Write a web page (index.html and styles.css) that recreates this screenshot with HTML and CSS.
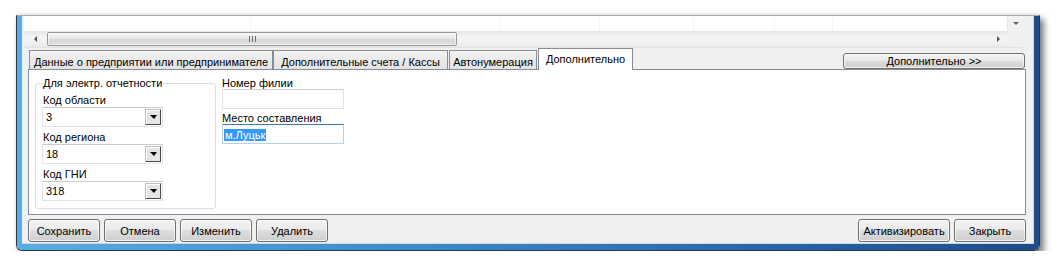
FILE: index.html
```html
<!DOCTYPE html>
<html>
    <head lang="ru">
        <meta charset="UTF-8">
        <title>Дополнительно</title>
        <link rel="stylesheet" href="styles.css">
    </head>
    <body>
        <div class="window">
            <div class="frame">
                <div class="content">
                    <div class="grid">
                        <div class="rows">
                            <div class="cells">
                                <span class="cell c1"></span>
                                <span class="cell c2"></span>
                                <span class="cell c3"></span>
                                <span class="cell c4"></span>
                                <span class="cell c5"></span>
                                <span class="cell c6"></span>
                            </div>
                            <div class="vscroll"><span class="tri-down"></span></div>
                        </div>
                        <div class="hscroll">
                            <span class="sb-left"><span class="tri-left"></span></span>
                            <div class="track">
                                <div class="thumb"><span class="grip"></span></div>
                            </div>
                            <span class="sb-right"><span class="tri-right"></span></span>
                            <span class="corner"></span>
                        </div>
                    </div>
                    <div class="tabs">
                        <div class="tab t1">Данные о предприятии или предпринимателе</div>
                        <div class="tab t2">Дополнительные счета / Кассы</div>
                        <div class="tab t3">Автонумерация</div>
                        <div class="tab on">Дополнительно</div>
                        <button class="btn more">Дополнительно &gt;&gt;</button>
                    </div>
                    <div class="panel">
                        <fieldset class="group">
                            <legend>Для электр. отчетности</legend>
                            <label>Код области</label>
                            <div class="combo"><span class="val">3</span><span class="drop"><span class="tri-down dark"></span></span></div>
                            <label>Код региона</label>
                            <div class="combo"><span class="val">18</span><span class="drop"><span class="tri-down dark"></span></span></div>
                            <label>Код ГНИ</label>
                            <div class="combo"><span class="val">318</span><span class="drop"><span class="tri-down dark"></span></span></div>
                        </fieldset>
                        <div class="side">
                            <label>Номер филии</label>
                            <div class="edit"></div>
                            <label>Место составления</label>
                            <div class="edit focus"><span class="sel">м.Луцьк</span></div>
                        </div>
                    </div>
                    <div class="actions">
                        <button class="btn">Сохранить</button>
                        <button class="btn">Отмена</button>
                        <button class="btn">Изменить</button>
                        <button class="btn">Удалить</button>
                        <button class="btn wide">Активизировать</button>
                        <button class="btn">Закрыть</button>
                    </div>
                </div>
            </div>
        </div>
    </body>
</html>
```
FILE: styles.css
```css
*{
    box-sizing:border-box;
}
body{
    margin:0;
    background:#fff;
    font-family:"Liberation Sans", Arial, sans-serif;
    font-size:11px;
    color:#000;
}
.window{
    width:1024px;
    height:236px;
    margin:15px 0 0 16px;
    border:1px solid #24364b;
    border-top-color:#a9aeb4;
    border-radius:0 0 6px 6px;
    box-shadow:4px 4px 6px rgba(0,0,0,.5), 0 -1px 3px rgba(0,0,0,.1);
    display:flex;
}
.frame{
    flex:1;
    display:flex;
    padding:0 5px 6px;
    border-radius:0 0 5px 5px;
    background:linear-gradient(to right,#58ade1,#3e8ecf 35%,#2a69ad 70%,#1c4b88);
}
.content{
    flex:1;
    display:flex;
    flex-direction:column;
    background:#f0f0f0;
    border:1px solid #cdd8e3;
    border-top:0;
    border-left-color:#eaf3fa;
}

/* grid + scrollbars */
.grid{
    margin-left:1px;
    width:999px;
    border-bottom:1px solid #e2e2e2;
}
.rows{
    display:flex;
    height:15px;
}
.cells{
    flex:1;
    display:flex;
    background:#fff;
}
.cell{
    border-right:1px solid #f7f7f7;
}
.c1{width:227px;}
.c2{width:249px;}
.c3{width:100px;}
.c4{width:94px;}
.c5{width:81px;}
.c6{width:58px;}
.vscroll{
    width:16px;
    background:#f2f2f2;
    border-left:1px solid #e6e6e6;
    display:flex;
    justify-content:center;
    padding-top:6px;
}
.tri-down{
    width:0;
    height:0;
    border-left:3px solid transparent;
    border-right:3px solid transparent;
    border-top:3px solid #606060;
}
.tri-down.dark{
    border-left-width:4px;
    border-right-width:3px;
    border-top:4px solid #000;
}
.hscroll{
    display:flex;
    height:16px;
    background:linear-gradient(#e4e4e4,#f3f3f3 35%,#f3f3f3 65%,#e8e8e8);
}
.sb-left,.sb-right{
    display:flex;
    align-items:center;
    justify-content:center;
}
.sb-left{width:23px;}
.sb-right{width:17px;}
.tri-left{
    width:0;
    height:0;
    border-top:3px solid transparent;
    border-bottom:3px solid transparent;
    border-right:3px solid #555;
}
.tri-right{
    width:0;
    height:0;
    border-top:3px solid transparent;
    border-bottom:3px solid transparent;
    border-left:3px solid #555;
}
.track{
    flex:1;
    padding:1px 0;
}
.thumb{
    width:410px;
    height:14px;
    border:1px solid #979797;
    border-radius:2px;
    background:linear-gradient(#f4f4f4,#e6e6e6 50%,#d8d8d8 51%,#dedede);
    box-shadow:inset 0 0 0 1px rgba(255,255,255,.6);
    display:flex;
    align-items:center;
    justify-content:center;
}
.grip{
    width:7px;
    height:6px;
    background:linear-gradient(to right,#6a6a6a 0 1px,transparent 1px 3px,#6a6a6a 3px 4px,transparent 4px 6px,#6a6a6a 6px 7px);
}
.corner{
    width:16px;
    background:#f0f0f0;
}

/* tabs */
.tabs{
    display:flex;
    align-items:flex-end;
    height:22px;
    margin:0 7px 0 5px;
    padding-left:1px;
}
.tab{
    height:20px;
    line-height:18px;
    padding-top:2px;
    text-align:center;
    white-space:nowrap;
    border:1px solid #898c95;
    border-bottom:0;
    background:linear-gradient(#f2f2f2,#e2e2e2);
}
.t1{width:244px;}
.t2{width:175px;}
.t3{width:88px;margin-left:1px;}
.tab.on{
    width:95px;
    height:22px;
    line-height:20px;
    padding-top:0;
    margin-left:1px;
    background:#fff;
    position:relative;
    z-index:1;
}
.btn{
    font:inherit;
    color:#000;
    padding:0;
    border:1px solid #707070;
    border-radius:3px;
    background:linear-gradient(#f2f2f2,#ebebeb 45%,#dddddd 50%,#cfcfcf);
    box-shadow:inset 0 0 0 1px rgba(255,255,255,.7);
}
.more{
    align-self:flex-start;
    margin:5px 1px 0 auto;
    width:182px;
    height:16px;
    line-height:13px;
}

/* panel */
.panel{
    display:flex;
    align-items:flex-start;
    gap:6px;
    height:146px;
    margin:-1px 7px 0 5px;
    padding-left:6px;
    background:#fff;
    border:1px solid #898c95;
}
.group{
    width:181px;
    margin:7px 0 0;
    padding:3px 6px 7px;
    border:1px solid #d5dfe5;
    border-radius:3px;
    min-width:0;
}
.group legend{
    padding:0 1px;
    line-height:13px;
}
.group label{
    display:block;
    padding-left:1px;
    line-height:14px;
}
.group .combo + label{
    margin-top:3px;
}
.combo{
    width:121px;
    height:20px;
    display:flex;
    padding:1px;
    background:#fff;
    border:1px solid #e2e3ea;
    border-top-color:#c9cbd1;
}
.val{
    flex:1;
    padding-left:2px;
    line-height:16px;
}
.drop{
    width:16px;
    height:16px;
    display:flex;
    align-items:center;
    justify-content:center;
    background:#e4e4e4;
    border:1px solid;
    border-color:#bdbdbd #4a4a4a #4a4a4a #bdbdbd;
    box-shadow:inset 1px 1px 0 #fff;
}
.side{
    margin-top:7px;
}
.side label{
    display:block;
    line-height:12px;
}
.edit{
    width:122px;
    height:20px;
    background:#fff;
    border:1px solid #e2e3ea;
    border-top-color:#cfd0d6;
}
.edit + label{
    margin-top:3px;
}
.edit.focus{
    border-color:#b5d3ec;
    border-top-color:#3d7bad;
    padding:4px 1px 0;
}
.sel{
    display:inline-block;
    line-height:12px;
    padding:0 1px;
    background:#3399ff;
    color:#fff;
}

/* bottom buttons */
.actions{
    display:flex;
    gap:4px;
    height:23px;
    margin:4px 7px 0 5px;
}
.actions .btn{
    width:72px;
}
.actions .wide{
    width:92px;
    margin-left:auto;
}
```
